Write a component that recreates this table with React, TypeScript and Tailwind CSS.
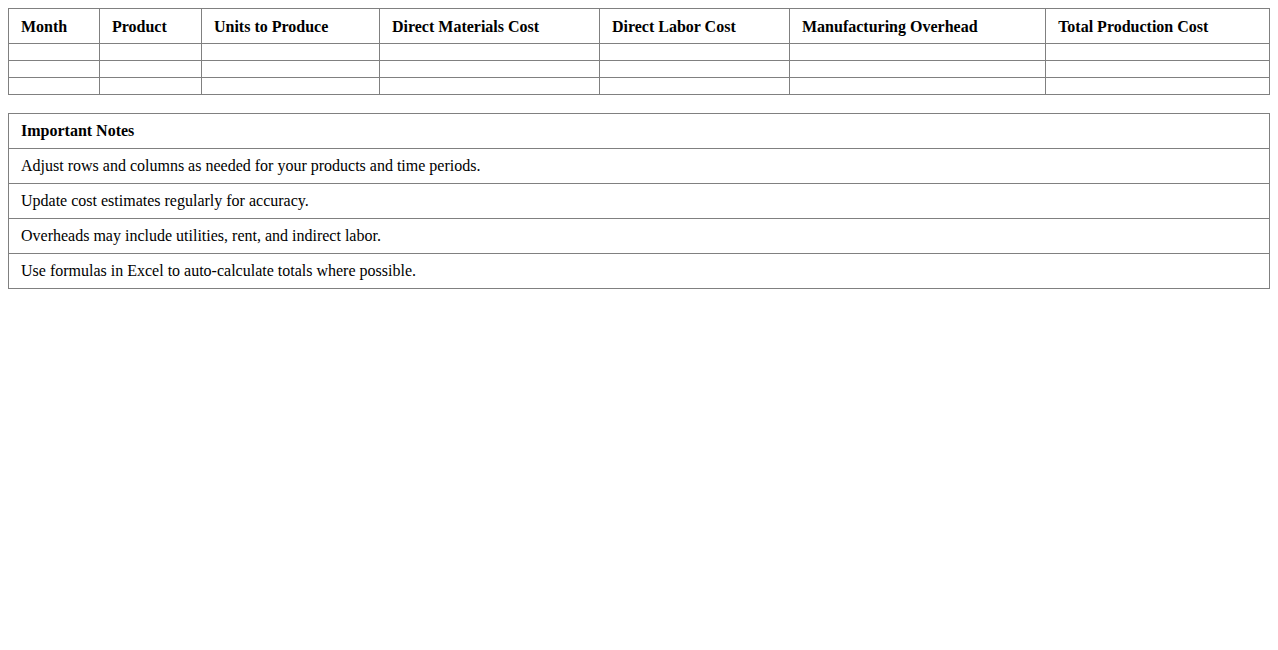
import React from 'react';

const columns = [
  'Month',
  'Product',
  'Units to Produce',
  'Direct Materials Cost',
  'Direct Labor Cost',
  'Manufacturing Overhead',
  'Total Production Cost',
];

const notes = [
  'Adjust rows and columns as needed for your products and time periods.',
  'Update cost estimates regularly for accuracy.',
  'Overheads may include utilities, rent, and indirect labor.',
  'Use formulas in Excel to auto-calculate totals where possible.',
];

const cell = 'border border-[#808080] px-3 py-2 text-left';

const App: React.FC = () => {
  return (
    <div className="min-h-screen bg-white p-2 font-['Liberation_Serif',serif] text-base leading-[18px] text-black">
      <table className="w-full border-collapse">
        <thead>
          <tr>
            {columns.map((c) => (
              <th
                key={c}
                className="border border-[#808080] px-3 pt-[9px] pb-[7px] text-left font-bold"
              >
                {c}
              </th>
            ))}
          </tr>
        </thead>
        <tbody>
          {[0, 1, 2].map((r) => (
            <tr key={r}>
              {columns.map((c) => (
                <td key={c} className={cell}></td>
              ))}
            </tr>
          ))}
        </tbody>
      </table>

      <table className="mt-[18px] w-full border-collapse">
        <thead>
          <tr>
            <th className={cell + ' font-bold'}>Important Notes</th>
          </tr>
        </thead>
        <tbody>
          {notes.map((n) => (
            <tr key={n}>
              <td className={cell}>{n}</td>
            </tr>
          ))}
        </tbody>
      </table>
    </div>
  );
};

export default App;
